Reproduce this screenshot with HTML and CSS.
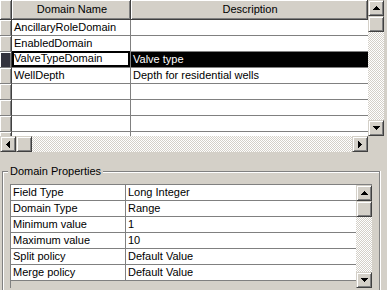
FILE: index.html
```html
<!DOCTYPE html>
<html lang="en">
<head>
    <meta charset="UTF-8">
    <title>Domains</title>
    <link rel="stylesheet" href="styles.css">
</head>
<body>
    <div class="domains">
        <div class="grid">
            <div class="row head">
                <div class="sel"></div>
                <div class="cell">Domain Name</div>
                <div class="cell">Description</div>
            </div>
            <div class="row"><div class="sel"></div><div class="cell">AncillaryRoleDomain</div><div class="cell"></div></div>
            <div class="row"><div class="sel"></div><div class="cell">EnabledDomain</div><div class="cell"></div></div>
            <div class="row current"><div class="sel"></div><div class="cell focus">ValveTypeDomain</div><div class="cell picked">Valve type</div></div>
            <div class="row"><div class="sel"></div><div class="cell">WellDepth</div><div class="cell">Depth for residential wells</div></div>
            <div class="row"><div class="sel"></div><div class="cell"></div><div class="cell"></div></div>
            <div class="row"><div class="sel"></div><div class="cell"></div><div class="cell"></div></div>
            <div class="row"><div class="sel"></div><div class="cell"></div><div class="cell"></div></div>
            <div class="row"><div class="sel"></div><div class="cell"></div><div class="cell"></div></div>
        </div>
        <div class="vscroll">
            <div class="btn"><svg width="7" height="4" shape-rendering="crispEdges"><path d="M3 0h1v1h-1zM2 1h3v1h-3zM1 2h5v1h-5zM0 3h7v1h-7z"/></svg></div>
            <div class="btn"></div>
            <div class="track"></div>
            <div class="btn"><svg width="7" height="4" shape-rendering="crispEdges"><path d="M0 0h7v1h-7zM1 1h5v1h-5zM2 2h3v1h-3zM3 3h1v1h-1z"/></svg></div>
        </div>
        <div class="hscroll">
            <div class="btn"><svg width="4" height="7" shape-rendering="crispEdges"><path d="M3 0h1v7h-1zM2 1h1v5h-1zM1 2h1v3h-1zM0 3h1v1h-1z"/></svg></div>
            <div class="btn"></div>
            <div class="track"></div>
            <div class="btn"><svg width="4" height="7" shape-rendering="crispEdges"><path d="M0 0h1v7h-1zM1 1h1v5h-1zM2 2h1v3h-1zM3 3h1v1h-1z"/></svg></div>
        </div>
        <div class="corner"></div>
    </div>

    <div class="group">
        <span class="legend">Domain Properties</span>
        <div class="props">
            <div class="plist">
                <div class="prow"><div class="cell">Field Type</div><div class="cell">Long Integer</div></div>
                <div class="prow"><div class="cell">Domain Type</div><div class="cell">Range</div></div>
                <div class="prow"><div class="cell">Minimum value</div><div class="cell">1</div></div>
                <div class="prow"><div class="cell">Maximum value</div><div class="cell">10</div></div>
                <div class="prow"><div class="cell">Split policy</div><div class="cell">Default Value</div></div>
                <div class="prow"><div class="cell">Merge policy</div><div class="cell">Default Value</div></div>
            </div>
            <div class="vscroll">
                <div class="btn"><svg width="7" height="4" shape-rendering="crispEdges"><path d="M3 0h1v1h-1zM2 1h3v1h-3zM1 2h5v1h-5zM0 3h7v1h-7z"/></svg></div>
                <div class="btn"></div>
                <div class="track"></div>
                <div class="btn"><svg width="7" height="4" shape-rendering="crispEdges"><path d="M0 0h7v1h-7zM1 1h5v1h-5zM2 2h3v1h-3zM3 3h1v1h-1z"/></svg></div>
            </div>
        </div>
    </div>
</body>
</html>
```

FILE: styles.css
```css
body {
    margin: 0;
    background-color: #d4d0c8;
    color: #000;
    font-family: "Liberation Sans", Arial, sans-serif;
    font-size: 11px;
    overflow: hidden;
}
.domains {
    display: grid;
    grid-template-columns: 368px 16px;
    grid-template-rows: 136px 16px;
}
.grid {
    background-color: #fff;
    overflow: hidden;
}
.row {
    display: grid;
    grid-template-columns: 12px 119px 1fr;
    height: 16px;
}
.row > div {
    border-bottom: 1px solid #808080;
}
.cell {
    padding-left: 2px;
    line-height: 15px;
    white-space: nowrap;
    overflow: hidden;
}
.row .cell:nth-child(2) {
    border-right: 1px solid #808080;
}
.sel {
    background-color: #d4d0c8;
    border-right: 1px solid #404040;
    box-shadow: inset 1px 1px #fff, inset -1px 0 #808080;
}
.current .sel {
    background-color: #33333d;
}
.focus {
    box-shadow: inset 0 0 0 2px #000;
    margin-top: -1px;
}
.picked {
    background-color: #000;
    color: #fff;
}
.head {
    height: 20px;
}
.head > div {
    background-color: #d4d0c8;
    border-bottom: 1px solid #404040;
    border-right: 1px solid #404040;
    box-shadow: inset 1px 1px #fff, inset -1px -1px #808080;
}
.head .cell {
    text-align: center;
    line-height: 19px;
}
.head .cell:nth-child(2) {
    border-right: 1px solid #404040;
}
.vscroll, .hscroll {
    display: flex;
    background: repeating-conic-gradient(#fff 0 25%, #d4d0c8 0 50%) 0 0 / 2px 2px;
}
.vscroll {
    flex-direction: column;
}
.track {
    flex: 1;
}
.btn {
    flex: 0 0 16px;
    box-sizing: border-box;
    width: 16px;
    height: 16px;
    display: flex;
    align-items: center;
    justify-content: center;
    background-color: #d4d0c8;
    border: 1px solid;
    border-color: #d4d0c8 #404040 #404040 #d4d0c8;
    box-shadow: inset 1px 1px #fff, inset -1px -1px #808080;
}
.corner {
    background-color: #d4d0c8;
}
/* group box runs off the bottom of the window, so no bottom edge */
.group {
    position: relative;
    margin: 19px 7px 0 2px;
    height: 106px;
    padding: 12px 0 0 7px;
    border: 1px solid #808080;
    border-bottom: none;
    box-shadow: inset 1px 1px #fff, 1px 0 #fff;
}
.legend {
    position: absolute;
    top: -7px;
    left: 5px;
    padding: 0 2px;
    line-height: 13px;
    background-color: #d4d0c8;
}
.props {
    display: grid;
    grid-template-columns: 345px 16px;
    height: 103px;
    width: 361px;
    border-top: 1px solid #808080;
    border-left: 1px solid #808080;
}
.plist {
    background-color: #d4d0c8;
    overflow: hidden;
}
.prow {
    display: grid;
    grid-template-columns: 115px 1fr;
    height: 16px;
    background-color: #fff;
}
.prow .cell {
    border-bottom: 1px solid #808080;
}
.prow .cell:first-child {
    border-right: 1px solid #808080;
}
```
